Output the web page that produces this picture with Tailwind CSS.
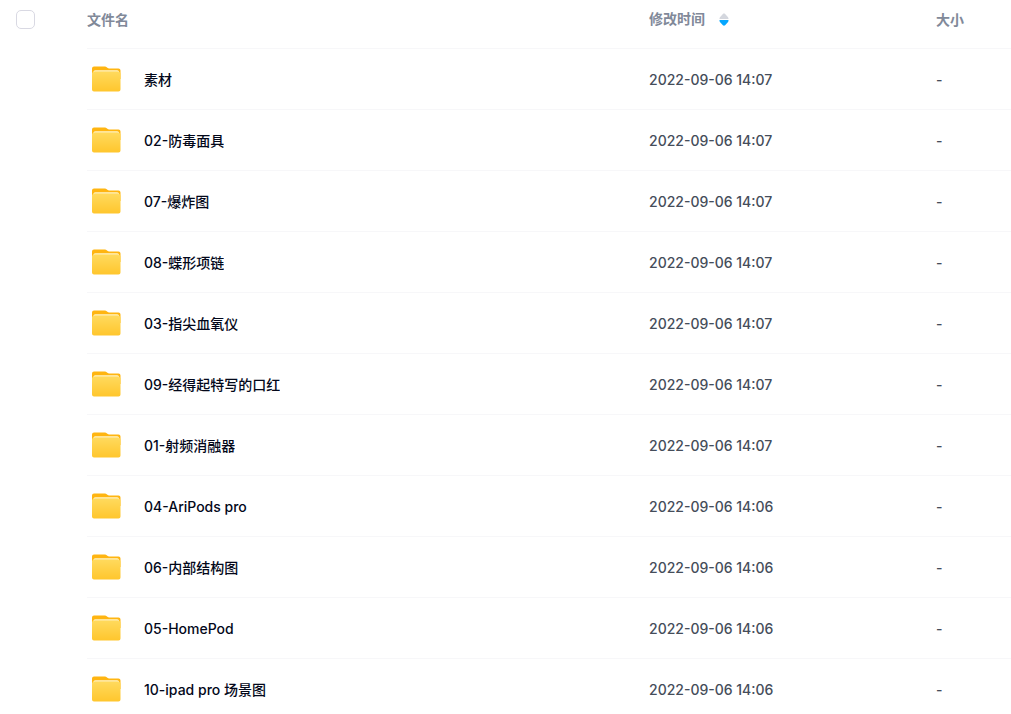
<!DOCTYPE html>
<html lang="zh-CN">
<head>
    <meta charset="UTF-8">
    <meta name="viewport" content="width=device-width, initial-scale=1.0">
    <title>文件列表</title>
    <script src="https://cdn.jsdelivr.net/npm/@tailwindcss/browser@4"></script>
</head>
<body class="bg-white font-['Inter','Noto_Sans_CJK_SC',sans-serif] text-sm">

    <!-- Shared icons -->
    <svg class="absolute size-0" xmlns="http://www.w3.org/2000/svg">
        <defs>
            <linearGradient id="folder-front" x1="0" y1="0" x2="0" y2="1">
                <stop offset="0" stop-color="#ffdb60"/>
                <stop offset="1" stop-color="#ffc62d"/>
            </linearGradient>
        </defs>
        <symbol id="folder" viewBox="0.5 0 40 40">
            <path fill="#ffb511" d="M5.500 9.500a2 2 0 0 1 2-2H18.500c.7 0 1.200.2 1.700.7l1 .8c.4.300.8.500 1.300.5H32a2 2 0 0 1 2 2V20H5.500z"/>
            <path fill="url(#folder-front)" d="M5.500 14.500c0-.9.600-1.300 1.200-1.500.3-.9 1-1.500 2-1.500h22c1 0 1.700.6 2 1.500.7.2 1.300.6 1.300 1.500v16a2 2 0 0 1-2 2h-24.500a2 2 0 0 1-2-2z"/>
            <path fill="#ffeebb" d="M7 13.500c0-1.400.8-2.200 2-2.200h21.500c1.200 0 2 .8 2 2.200-.3-.6-.9-1-1.600-1H8.600c-.7 0-1.300.4-1.600 1z"/>
        </symbol>
    </svg>

    <div class="h-screen overflow-hidden">
        <table class="w-full table-fixed border-separate border-spacing-0 text-left">
            <thead>
                <tr class="h-[49px] text-[#818999]">
                    <th class="w-[87px] pl-4 align-top pt-[10px]">
                        <input type="checkbox" aria-label="全选" class="block size-[19px] appearance-none rounded-[5px] border border-[#d9d9e3] bg-white checked:bg-[#06a7ff]">
                    </th>
                    <th class="border-b border-[#f7f7f9] pb-2 font-bold">文件名</th>
                    <th class="w-[287px] border-b border-[#f7f7f9] pb-[10px] font-bold">
                        <button type="button" class="flex items-center gap-[14px] font-bold">
                            修改时间
                            <svg class="h-[13px] w-[10px]" viewBox="0 0 10 13">
                                <path fill="#d4d7de" d="M.5 6c0-1 .2-1.500.9-2.200L3.900 1c.6-.6 1.600-.6 2.200 0l2.500 2.800c.7.7.9 1.200.9 2.200z"/>
                                <path fill="#06a7ff" d="M.5 7c0 1.300.2 1.900.9 2.600l2.500 2.700c.6.6 1.600.6 2.200 0l2.500-2.700c.7-.7.9-1.300.9-2.600z"/>
                            </svg>
                        </button>
                    </th>
                    <th class="w-[75px] border-b border-[#f7f7f9] pb-2 font-bold">大小</th>
                </tr>
            </thead>
            <tbody id="file-list"></tbody>
        </table>
    </div>

    <script>
        const files = [
            ['素材', '2022-09-06 14:07'],
            ['02-防毒面具', '2022-09-06 14:07'],
            ['07-爆炸图', '2022-09-06 14:07'],
            ['08-蝶形项链', '2022-09-06 14:07'],
            ['03-指尖血氧仪', '2022-09-06 14:07'],
            ['09-经得起特写的口红', '2022-09-06 14:07'],
            ['01-射频消融器', '2022-09-06 14:07'],
            ['04-AriPods pro', '2022-09-06 14:06'],
            ['06-内部结构图', '2022-09-06 14:06'],
            ['05-HomePod', '2022-09-06 14:06'],
            ['10-ipad pro 场景图', '2022-09-06 14:06'],
        ];

        document.getElementById('file-list').innerHTML = files.map(([name, time]) => `
            <tr class="h-[61px] font-medium text-[#454d5a]">
                <td></td>
                <td class="border-b border-[#f7f7f9]">
                    <a href="#" class="flex items-center gap-[17px] text-[#03081a]">
                        <svg class="size-10 shrink-0"><use href="#folder"/></svg>
                        <span class="truncate pt-0.5">${name}</span>
                    </a>
                </td>
                <td class="border-b border-[#f7f7f9] pt-0.5">${time}</td>
                <td class="border-b border-[#f7f7f9] pt-0.5">-</td>
            </tr>`).join('');
    </script>
</body>
</html>
